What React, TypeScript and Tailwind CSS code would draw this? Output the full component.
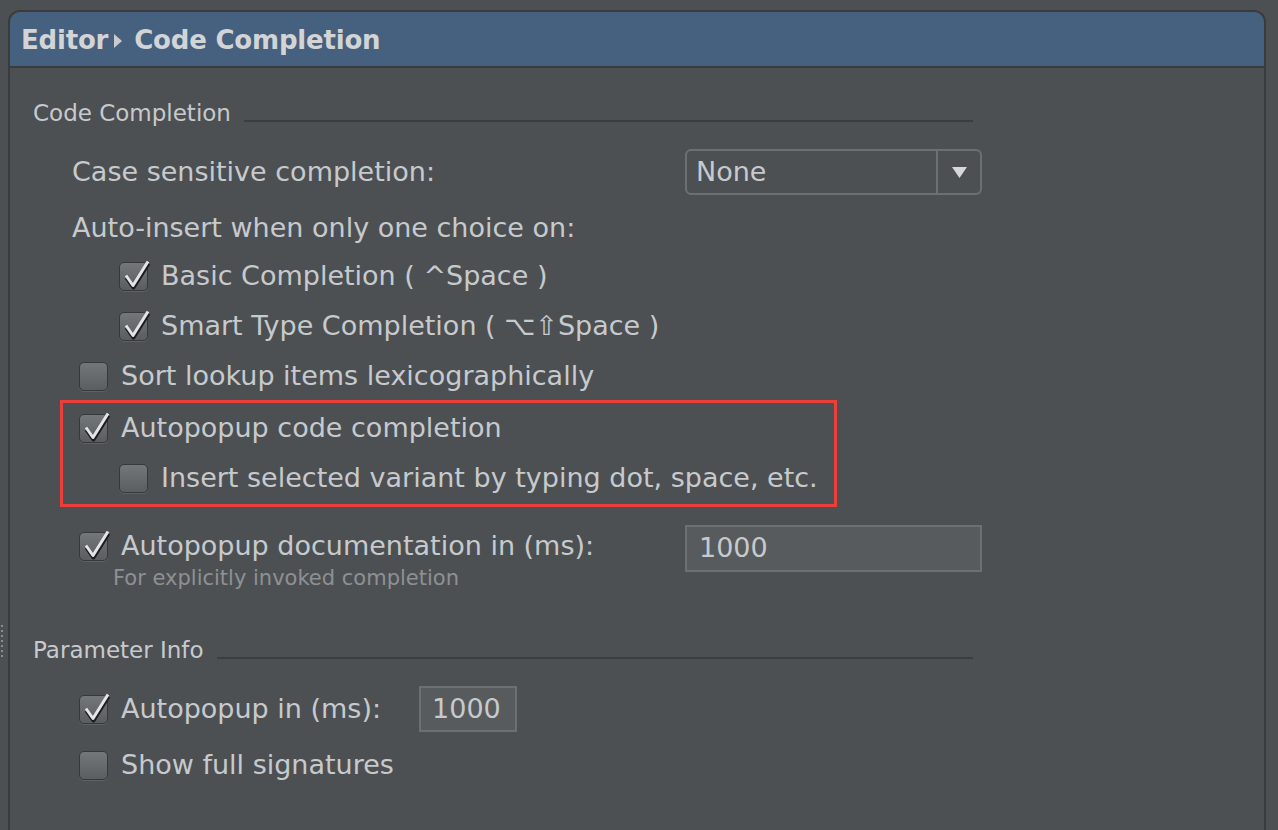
const FONT = { fontFamily: '"DejaVu Sans", "Liberation Sans", sans-serif' };

function Box({ checked }: { checked?: boolean }) {
  return (
    <div className="relative w-[29px] h-[29px] shrink-0">
      <div className="absolute inset-0 rounded-[5px] border border-[#36383a] bg-gradient-to-b from-[#74777a] to-[#5b5e60] shadow-[0_1px_0_#5f6264]" />
      {checked && (
        <svg className="absolute left-0 top-0 overflow-visible" width="29" height="29" viewBox="0 0 29 29">
          <polyline points="7,14 14,24 29,0" fill="none" stroke="#1c1d1e" strokeWidth="4" strokeLinejoin="round" transform="translate(0.5,1.5)" />
          <polyline points="7,14 14,24 29,0" fill="none" stroke="#e4e5e6" strokeWidth="3" strokeLinejoin="round" transform="translate(0,-0.5)" />
        </svg>
      )}
    </div>
  );
}

function CheckRow({ checked, label, indent }: { checked?: boolean; label: string; indent: string }) {
  return (
    <div className={`flex items-center h-[50px] ${indent}`}>
      <Box checked={checked} />
      <span className="ml-[13px] text-[27px] whitespace-nowrap">{label}</span>
    </div>
  );
}

function SectionTitle({ title }: { title: string }) {
  return (
    <div className="flex items-center h-[30px] pl-[23px] pr-[291px]">
      <span className="text-[23px] whitespace-nowrap">{title}</span>
      <div className="flex-1 h-[2px] bg-[#3b3d3f] mt-[16px] ml-[13px]" />
    </div>
  );
}

export default function App() {
  return (
    <div
      className="w-[1278px] h-[830px] overflow-hidden bg-[#4d5053] pl-[8px] pt-[10px] pr-[12px] relative text-[#c7cacd]"
      style={FONT}
    >
      {/* splitter handle */}
      <div className="absolute left-[1px] top-[625px] flex flex-col gap-[3px]">
        {[0, 1, 2, 3, 4, 5, 6].map((i) => (
          <div key={i} className="w-[2px] h-[2px] bg-[#8a8d90]" />
        ))}
      </div>

      <div className="h-[900px] border-2 border-b-0 border-[#3a3b3c] rounded-t-[12px] overflow-hidden">
        <div className="h-[56px] bg-[#46607f] border-b-2 border-[#3a3b3c] flex items-center pt-[3px] pl-[11px] text-[26px] font-bold text-[#d3d4d6] tracking-[-0.2px]">
          <span>Editor</span>
          <svg className="ml-[6px] mr-[12px]" width="8" height="14" viewBox="0 0 8 14">
            <polygon points="0,0 8,7 0,14" fill="#c9cbcd" />
          </svg>
          <span>Code Completion</span>
        </div>

        <div className="pt-[30px]">
          <SectionTitle title="Code Completion" />

          <div className="flex items-center h-[46px] mt-[21px] pl-[62px]">
            <span className="w-[613px] text-[27px] whitespace-nowrap">Case sensitive completion:</span>
            <div className="w-[297px] h-[46px] border-2 border-[#6d7073] rounded-[6px] flex">
              <div className="flex-1 flex items-center pl-[9px] text-[27px]">None</div>
              <div className="w-[44px] border-l-2 border-[#6d7073] flex items-center justify-center">
                <svg width="15" height="11" viewBox="0 0 15 11">
                  <polygon points="0,0 15,0 7.5,11" fill="#d5d7d9" />
                </svg>
              </div>
            </div>
          </div>

          <div className="flex items-center h-[46px] mt-[10px] pl-[62px] text-[27px] whitespace-nowrap">
            Auto-insert when only one choice on:
          </div>

          <CheckRow checked label="Basic Completion ( ^Space )" indent="pl-[109px]" />
          <CheckRow checked label="Smart Type Completion ( ⌥⇧Space )" indent="pl-[109px]" />
          <CheckRow label="Sort lookup items lexicographically" indent="pl-[69px]" />

          <div className="ml-[50px] w-[777px] -mt-[1px] border-[3px] border-[#ec3f3c] pb-[1px]">
            <CheckRow checked label="Autopopup code completion" indent="pl-[16px]" />
            <CheckRow label="Insert selected variant by typing dot, space, etc." indent="pl-[56px]" />
          </div>

          <div className="flex mt-[18px] pl-[69px]">
            <div className="w-[606px]">
              <div className="flex items-center h-[42px]">
                <Box checked />
                <span className="ml-[13px] text-[27px] whitespace-nowrap">Autopopup documentation in (ms):</span>
              </div>
              <div className="h-[24px] flex items-center pl-[34px] text-[21px] text-[#8e9194] whitespace-nowrap">
                For explicitly invoked completion
              </div>
            </div>
            <div className="w-[297px] h-[47px] bg-[#585b5d] border-2 border-[#6d7073] flex items-center pl-[12px] text-[27px]">
              1000
            </div>
          </div>

          <div className="mt-[44px]">
            <SectionTitle title="Parameter Info" />
          </div>

          <div className="flex items-center h-[46px] mt-[21px] pl-[69px]">
            <Box checked />
            <span className="ml-[13px] text-[27px] whitespace-nowrap">Autopopup in (ms):</span>
            <div className="ml-[38px] w-[98px] h-[46px] bg-[#585b5d] border-2 border-[#6d7073] flex items-center pl-[11px] text-[27px]">
              1000
            </div>
          </div>

          <div className="mt-[8px]">
            <CheckRow label="Show full signatures" indent="pl-[69px]" />
          </div>
        </div>
      </div>
    </div>
  );
}
